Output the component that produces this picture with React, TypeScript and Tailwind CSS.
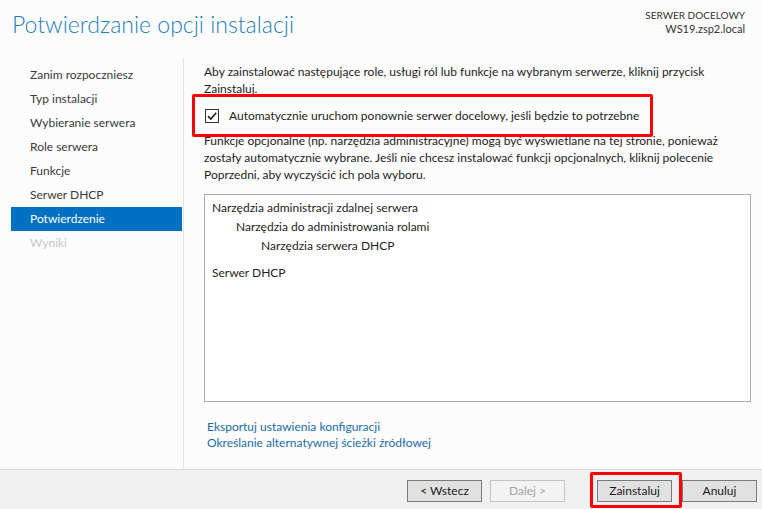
import React from 'react'

const NAV = [
  'Zanim rozpoczniesz',
  'Typ instalacji',
  'Wybieranie serwera',
  'Role serwera',
  'Funkcje',
  'Serwer DHCP',
  'Potwierdzenie',
  'Wyniki',
]

const ACTIVE = 6

function Checkbox() {
  return (
    <div className="w-[14px] h-[14px] border border-[#333] bg-white flex items-center justify-center">
      <svg width="12" height="12" viewBox="0 0 12 12">
        <path d="M2 6.2 L4.8 9 L10.2 2.8" fill="none" stroke="#222" strokeWidth="1.7" />
      </svg>
    </div>
  )
}

function Btn({ label, disabled }: { label: string; disabled?: boolean }) {
  return (
    <div
      className={
        disabled
          ? 'w-[75px] h-[22px] flex items-center justify-center border border-[#c4c4c4] bg-[#f3f3f3] text-[#a3a3a3]'
          : 'w-[75px] h-[22px] flex items-center justify-center border border-[#7a7a7a] bg-[#e1e1e1] text-[#1a1a1a]'
      }
    >
      {label}
    </div>
  )
}

export default function App() {
  return (
    <div className="relative w-[762px] h-[509px] bg-[#fcfcfc] flex flex-col text-[12px] text-[#1e1e1e] font-['Lato',sans-serif] overflow-hidden">
      <div className="h-[58px] flex justify-between">
        <div className="pl-[12px] pt-[7px] text-[23px] font-light text-[#1f80bd] leading-[34px]">
          Potwierdzanie opcji instalacji
        </div>
        <div className="pr-[17px] pt-[9px] text-right leading-[13px]">
          <div className="text-[10px] text-[#333]">SERWER DOCELOWY</div>
          <div className="text-[11px] text-[#333]">WS19.zsp2.local</div>
        </div>
      </div>

      <div className="flex-1 flex">
        <div className="w-[184px] border-r border-[#e3e3e3] pt-[5px] pl-[11px] pr-[1px]">
          {NAV.map((item, i) => (
            <div
              key={item}
              className={
                i === ACTIVE
                  ? 'h-[24px] flex items-center pl-[19px] bg-[#0070c0] text-white'
                  : i > ACTIVE
                    ? 'h-[24px] flex items-center pl-[19px] text-[#c6c6c6]'
                    : 'h-[24px] flex items-center pl-[19px] text-[#3a3a3a]'
              }
            >
              {item}
            </div>
          ))}
        </div>

        <div className="flex-1 pl-[20px] pr-[11px]">
          <p className="mt-[5px] leading-[17px] whitespace-nowrap">
            Aby zainstalować następujące role, usługi ról lub funkcje na wybranym serwerze, kliknij przycisk
            <br />
            Zainstaluj.
          </p>
          <div className="mt-[9px] h-[20px] flex items-center gap-[10px] pl-[1px]">
            <Checkbox />
            <span>Automatycznie uruchom ponownie serwer docelowy, jeśli będzie to potrzebne</span>
          </div>
          <p className="mt-[6px] leading-[17px] whitespace-nowrap">
            Funkcje opcjonalne (np. narzędzia administracyjne) mogą być wyświetlane na tej stronie, ponieważ
            <br />
            zostały automatycznie wybrane. Jeśli nie chcesz instalować funkcji opcjonalnych, kliknij polecenie
            <br />
            Poprzedni, aby wyczyścić ich pola wyboru.
          </p>
          <div className="mt-[11px] h-[208px] border border-[#acacac] bg-white pt-[3px] pl-[7px] leading-[19px]">
            <div>Narzędzia administracji zdalnej serwera</div>
            <div className="pl-[24px]">Narzędzia do administrowania rolami</div>
            <div className="pl-[49px]">Narzędzia serwera DHCP</div>
            <div className="mt-[8px]">Serwer DHCP</div>
          </div>
          <div className="mt-[17px] pl-[3px] leading-[16px] text-[#1b6ca8]">
            <div>Eksportuj ustawienia konfiguracji</div>
            <div>Określanie alternatywnej ścieżki źródłowej</div>
          </div>
        </div>
      </div>

      <div className="h-[40px] border-t border-[#dcdcdc] bg-[#f0f0f0] flex justify-end items-start pt-[10px] pr-[5px]">
        <div className="flex gap-[8px]">
          <Btn label="< Wstecz" />
          <Btn label="Dalej >" disabled />
        </div>
        <div className="flex gap-[10px] ml-[32px]">
          <Btn label="Zainstaluj" />
          <Btn label="Anuluj" />
        </div>
      </div>

      <div className="absolute left-[192px] top-[94px] w-[461px] h-[43px] border-[3px] border-[#f00] rounded-[2px]" />
      <div className="absolute left-[590px] top-[472px] w-[92px] h-[36px] border-[3px] border-[#f00] rounded-[2px]" />
    </div>
  )
}
